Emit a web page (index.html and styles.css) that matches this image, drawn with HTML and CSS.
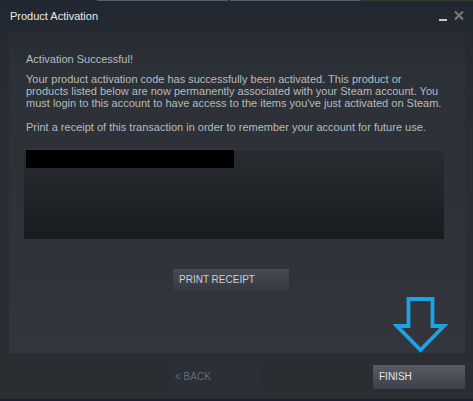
FILE: index.html
```html
<!DOCTYPE html>
<html>
<head>
<meta charset="utf-8">
<link rel="stylesheet" href="styles.css">
</head>
<body>
<div class="window">
  <div class="topline"></div>
  <div class="titlebar">
    <span class="title">Product Activation</span>
    <div class="controls">
      <span class="minimize"></span>
      <svg class="close" width="10" height="9" viewBox="0 0 10 9"><path d="M1 0.5 L9 8.5 M9 0.5 L1 8.5" stroke="#7a7c80" stroke-width="2" fill="none"/></svg>
    </div>
  </div>
  <div class="panel">
    <p class="heading">Activation Successful!</p>
    <p class="para">Your product activation code has successfully been activated. This product or products listed below are now permanently associated with your Steam account. You must login to this account to have access to the items you've just activated on Steam.</p>
    <p class="para para2">Print a receipt of this transaction in order to remember your account for future use.</p>
    <div class="list">
      <div class="redacted"></div>
    </div>
    <div class="print-row">
      <div class="btn btn-print">PRINT RECEIPT</div>
    </div>
  </div>
  <div class="footer">
    <div class="btn btn-back">&lt; BACK</div>
    <div class="btn btn-finish">FINISH</div>
  </div>
  <div class="bottomline"></div>
  <svg class="arrow" width="56" height="60" viewBox="0 0 56 60">
    <path d="M15.5 4 L39.5 4 L39.5 31 L51 31 L27.5 55 L4 31 L15.5 31 Z" fill="none" stroke="#1aa3e5" stroke-width="3.8" stroke-linejoin="miter"/>
  </svg>
</div>
</body>
</html>
```
FILE: styles.css
```css
* { box-sizing: border-box; }
html, body { margin: 0; padding: 0; }
body {
  width: 473px;
  height: 401px;
  overflow: hidden;
  background: #2a2d32;
  font-family: "Liberation Sans", Arial, sans-serif;
}
.window {
  position: relative;
  width: 473px;
  height: 401px;
  display: flex;
  flex-direction: column;
  background: linear-gradient(to bottom, #212731 0px, #242a32 30px, #282c33 90px, #2a2d32 140px, #2a2d32 100%);
}
.topline {
  height: 1px;
  background: linear-gradient(to right, #23272e 0, #23272e 97px, #5c5d5f 97px, #5c5d5f 228px, #2a2c30 228px, #2a2c30 230px, #5e5f61 230px, #5e5f61 360px, #3a3733 360px, #3a3733 100%);
}
.titlebar {
  height: 29px;
  display: flex;
  align-items: flex-start;
  justify-content: space-between;
  padding: 9px 9px 0 10px;
}
.title {
  color: #e6e9ec;
  font-size: 11px;
  line-height: 12px;
}
.controls {
  display: flex;
  align-items: flex-start;
  gap: 7px;
  padding-top: 1px;
}
.minimize {
  display: block;
  width: 8px;
  height: 2px;
  margin-top: 8px;
  background: #c8c9cb;
}
.close { display: block; }
.panel {
  margin: 0 8px 0 9px;
  height: 323px;
  padding: 23px 0 0 0;
  background: linear-gradient(to bottom, #272c34 0px, #2c3037 40px, #2e3238 110px, #2f3339 220px, #33373d 100%);
  display: flex;
  flex-direction: column;
}
.heading, .para {
  margin: 0;
  padding: 0 0 0 17px;
  color: #b7bbbf;
  font-size: 11px;
  line-height: 12px;
}
.heading { margin-bottom: 8px; }
.para { padding-right: 22px; }
.para2 { margin-top: 12px; }
.list {
  margin: 16px 0 0 15px;
  width: 420px;
  height: 90px;
  border-top: 1px solid #363a40;
  padding-left: 2px;
  background: linear-gradient(to bottom, #282c31 0%, #22262b 45%, #181b1e 100%);
}
.redacted {
  width: 208px;
  height: 18px;
  background: #000;
}
.print-row {
  margin-top: 30px;
  padding-left: 164px;
}
.btn {
  font-size: 10px;
  padding-left: 6px;
  width: 92px;
  height: 24px;
  line-height: 24px;
}
.btn-print {
  width: 116px;
  height: 22px;
  line-height: 22px;
  color: #c9d1da;
  background: linear-gradient(to bottom, #464b54 0%, #3c4048 60%, #343840 100%);
}
.footer {
  height: 46px;
  display: flex;
  align-items: flex-start;
  padding: 12px 0 0 169px;
  gap: 112px;
}
.btn-back {
  color: #646d76;
  background: #2c3036;
}
.btn-finish {
  color: #e2e5e8;
  background: linear-gradient(to bottom, #565b65 0%, #4a4e57 50%, #3d4148 100%);
}
.bottomline {
  height: 2px;
  background: #1b2030;
}
.arrow {
  position: absolute;
  left: 393px;
  top: 295px;
}
```
